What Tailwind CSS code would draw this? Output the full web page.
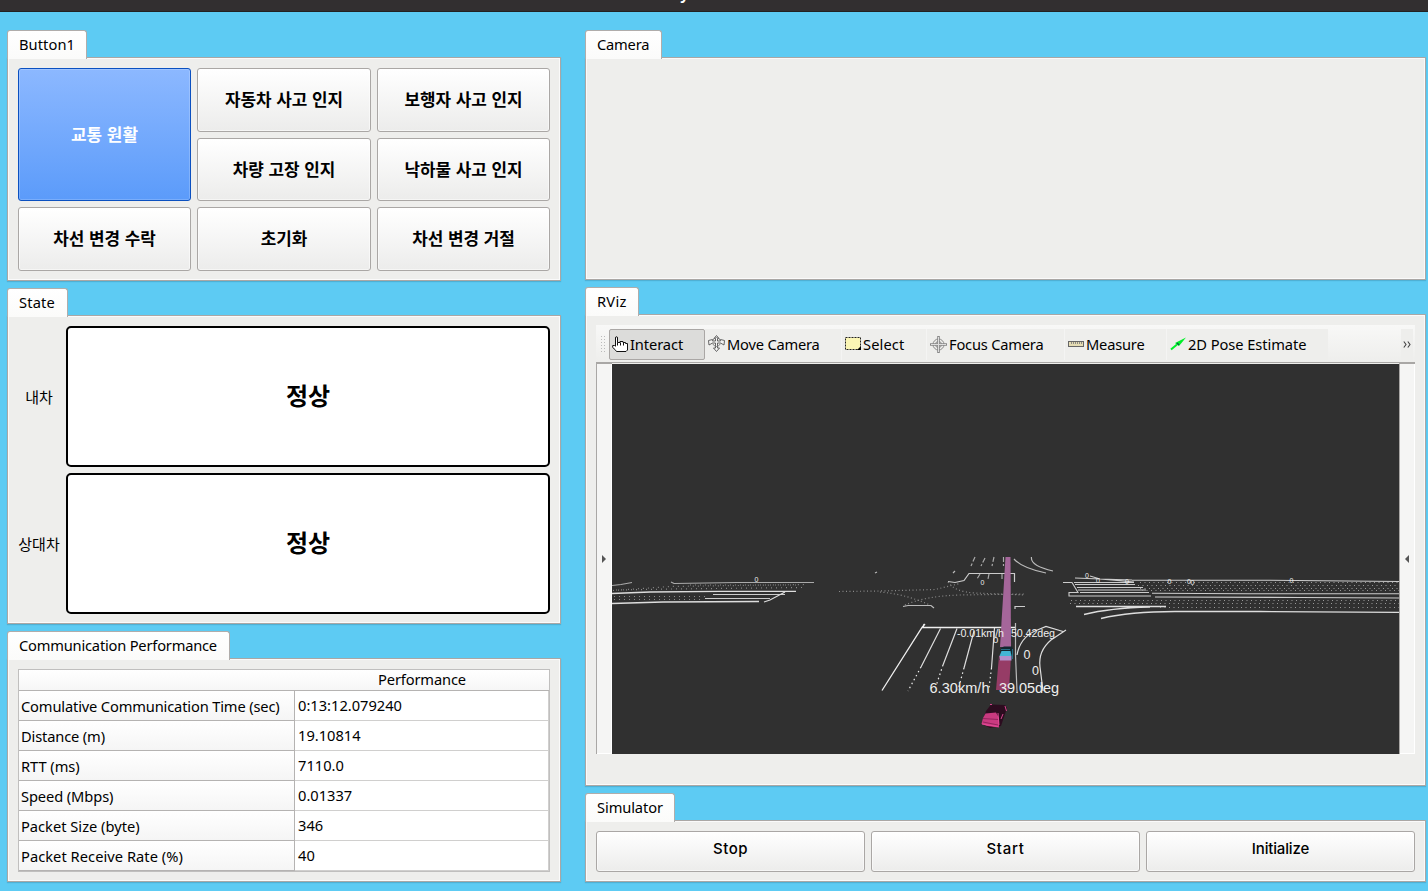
<!DOCTYPE html>
<html lang="ko">
<head>
<meta charset="utf-8">
<title>Cooperative driving monitor</title>
<script src="https://cdn.jsdelivr.net/npm/@tailwindcss/browser@4"></script>
</head>
<body class="w-[1428px] h-[891px] overflow-hidden flex flex-col bg-[#5dcbf3] text-black text-[14.67px] font-['Noto_Sans','Noto_Sans_CJK_KR',sans-serif]">
<header class="h-3 shrink-0 bg-[#322f30] border-b border-[#222] overflow-hidden flex justify-center text-white font-bold leading-none"><span class="-mt-[13px] mr-[59px]">y</span></header>
<main class="flex pl-[7px] gap-6 pt-[18px]">
  <div class="w-[554px] flex flex-col">
    <section class="flex flex-col h-[251px]">
      <div class="relative z-10 w-20 h-[29px] -mb-0.5 rounded-t-[3px] border border-b-0 border-[#b0adab] bg-linear-to-b from-white to-[#fbfbfa] flex items-center pl-[11px] pb-0.5"><span class="tracking-[0.08px]">Button1</span></div>
      <div class="grow border border-[#aaa7a5] bg-[#eeeeec] shadow-[inset_0_0_0_1px_#fafafa,0_1px_1px_#4fb0d4] pt-2.5 pl-2.5 grid grid-cols-[173px_174px_173px] grid-rows-[64px_63px_64px] gap-1.5 font-bold text-[16.9px] font-['Noto_Sans_CJK_KR',sans-serif]">
        <button class="row-span-2 pb-0.5 rounded-[3px] border border-[#0b50c0] bg-linear-to-b from-[#8cb8ff] to-[#5b9bfa] text-white shadow-[inset_0_0_0_1px_#ffffff30]">교통 원활</button>
        <button class="pb-0.5 rounded-[3px] border border-[#aaa7a5] bg-linear-to-b from-white to-[#ececeb] shadow-[inset_0_0_0_1px_#ffffff80]">자동차 사고 인지</button>
        <button class="pb-0.5 rounded-[3px] border border-[#aaa7a5] bg-linear-to-b from-white to-[#ececeb] shadow-[inset_0_0_0_1px_#ffffff80]">보행자 사고 인지</button>
        <button class="pb-0.5 rounded-[3px] border border-[#aaa7a5] bg-linear-to-b from-white to-[#ececeb] shadow-[inset_0_0_0_1px_#ffffff80]">차량 고장 인지</button>
        <button class="pb-0.5 rounded-[3px] border border-[#aaa7a5] bg-linear-to-b from-white to-[#ececeb] shadow-[inset_0_0_0_1px_#ffffff80]">낙하물 사고 인지</button>
        <button class="pb-0.5 rounded-[3px] border border-[#aaa7a5] bg-linear-to-b from-white to-[#ececeb] shadow-[inset_0_0_0_1px_#ffffff80]">차선 변경 수락</button>
        <button class="pb-0.5 rounded-[3px] border border-[#aaa7a5] bg-linear-to-b from-white to-[#ececeb] shadow-[inset_0_0_0_1px_#ffffff80]">초기화</button>
        <button class="pb-0.5 rounded-[3px] border border-[#aaa7a5] bg-linear-to-b from-white to-[#ececeb] shadow-[inset_0_0_0_1px_#ffffff80]">차선 변경 거절</button>
      </div>
    </section>
    <section class="flex flex-col h-[336px] mt-[7px]">
      <div class="relative z-10 w-[61px] h-[29px] -mb-0.5 rounded-t-[3px] border border-b-0 border-[#b0adab] bg-linear-to-b from-white to-[#fbfbfa] flex items-center pl-[11px] pb-0.5"><span class="tracking-[0.15px]">State</span></div>
      <div class="grow border border-[#aaa7a5] bg-[#eeeeec] shadow-[inset_0_0_0_1px_#fafafa,0_1px_1px_#4fb0d4] pt-2.5 pl-2.5 grid grid-cols-[42px_484px] gap-x-1.5 grid-rows-[141px_141px] gap-y-1.5 text-center items-center font-['Noto_Sans_CJK_KR',sans-serif]">
        <span class="text-[15px] pt-0.5">내차</span>
        <div class="h-full rounded-[5px] border-2 border-black bg-white flex items-center justify-center pb-1 font-bold text-[24px]">정상</div>
        <span class="text-[15px] pt-0.5">상대차</span>
        <div class="h-full rounded-[5px] border-2 border-black bg-white flex items-center justify-center pb-1 font-bold text-[24px]">정상</div>
      </div>
    </section>
    <section class="flex flex-col h-[251px] mt-[7px]">
      <div class="relative z-10 w-[223px] h-[29px] -mb-0.5 rounded-t-[3px] border border-b-0 border-[#b0adab] bg-linear-to-b from-white to-[#fbfbfa] flex items-center pl-[11px] pb-0.5"><span class="tracking-[-0.2px]">Communication Performance</span></div>
      <div class="grow border border-[#aaa7a5] bg-[#eeeeec] shadow-[inset_0_0_0_1px_#fafafa,0_1px_1px_#4fb0d4] pt-2.5 pl-2.5">
        <div class="w-[532px] h-[203px] border border-[#c0bfbe] bg-white">
          <div class="h-[21px] border-b border-[#b5b3b2] bg-linear-to-b from-white to-[#f6f6f6] grid grid-cols-[276px_254px] leading-[19px]"><span></span><span class="text-center"><span class="tracking-[-0.15px]">Performance</span></span></div>
          <div class="grid grid-cols-[276px_254px] auto-rows-[30px]">
            <div class="border-b border-r border-[#b5b3b2] bg-linear-to-b from-white to-[#f5f5f5] flex items-center pl-0.5"><span class="tracking-[-0.15px] whitespace-nowrap">Comulative Communication Time (sec)</span></div><div class="border-b border-r border-[#d0cfce] flex items-center pl-[3px] pb-0.5"><span>0:13:12.079240</span></div>
            <div class="border-b border-r border-[#b5b3b2] bg-linear-to-b from-white to-[#f5f5f5] flex items-center pl-0.5"><span class="tracking-[-0.15px]">Distance (m)</span></div><div class="border-b border-r border-[#d0cfce] flex items-center pl-[3px] pb-0.5"><span>19.10814</span></div>
            <div class="border-b border-r border-[#b5b3b2] bg-linear-to-b from-white to-[#f5f5f5] flex items-center pl-0.5"><span class="tracking-[-0.05px]">RTT (ms)</span></div><div class="border-b border-r border-[#d0cfce] flex items-center pl-[3px] pb-0.5"><span>7110.0</span></div>
            <div class="border-b border-r border-[#b5b3b2] bg-linear-to-b from-white to-[#f5f5f5] flex items-center pl-0.5"><span class="tracking-[-0.1px]">Speed (Mbps)</span></div><div class="border-b border-r border-[#d0cfce] flex items-center pl-[3px] pb-0.5"><span>0.01337</span></div>
            <div class="border-b border-r border-[#b5b3b2] bg-linear-to-b from-white to-[#f5f5f5] flex items-center pl-0.5"><span class="tracking-[0px]">Packet Size (byte)</span></div><div class="border-b border-r border-[#d0cfce] flex items-center pl-[3px] pb-0.5"><span>346</span></div>
            <div class="border-b border-r border-[#b5b3b2] bg-linear-to-b from-white to-[#f5f5f5] flex items-center pl-0.5"><span class="tracking-[0.04px]">Packet Receive Rate (%)</span></div><div class="border-b border-r border-[#d0cfce] flex items-center pl-[3px] pb-0.5"><span>40</span></div>
          </div>
        </div>
      </div>
    </section>
  </div>

  <div class="w-[841px] flex flex-col">
    <section class="flex flex-col h-[250px]">
      <div class="relative z-10 w-[77px] h-[29px] -mb-0.5 rounded-t-[3px] border border-b-0 border-[#b0adab] bg-linear-to-b from-white to-[#fbfbfa] flex items-center pl-[11px] pb-0.5"><span class="tracking-[-0.2px]">Camera</span></div>
      <div class="grow border border-[#aaa7a5] bg-[#eeeeec] shadow-[inset_0_0_0_1px_#fafafa,0_1px_1px_#4fb0d4]"></div>
    </section>
    <section class="flex flex-col h-[499px] mt-[7px]">
      <div class="relative z-10 w-[54px] h-[29px] -mb-0.5 rounded-t-[3px] border border-b-0 border-[#b0adab] bg-linear-to-b from-white to-[#fbfbfa] flex items-center pl-[11px] pb-0.5"><span class="tracking-[0.25px]">RViz</span></div>
      <div class="grow border border-[#aaa7a5] bg-[#eeeeec] shadow-[inset_0_0_0_1px_#fafafa,0_1px_1px_#4fb0d4] pt-2.5 pl-2.5">
        <div class="w-[819px] h-[38px] pt-1 border-b border-[#a9a7a5] bg-linear-to-b from-[#f8f8f7] to-[#eeeeec] flex">
          <svg class="w-[13px] h-[31px] shrink-0" viewBox="0 0 13 31"><path d="M5.500 7v17M8.500 7v17" stroke="#bbb" stroke-dasharray="1 2" fill="none"/></svg>
          <div class="w-24 h-[31px] shrink-0 rounded-[2px] border border-[#aaa7a5] bg-[#dcdcda] flex items-center pl-0.5">
            <svg class="w-[17px] h-[17px] shrink-0 mr-px" viewBox="0 0 17 17"><path d="M3.500 10V2Q3.500.7 4.500.7T5.500 2V6.500H8V5.500H11V6.500H13.500V7.500H15.500V14L14 15.500H4.500L3 13.500.7 11.500V9.500H2.500L3.500 10.500" fill="#fff" stroke="#111"/><path d="M8.500 6.500V9.500M11.500 6.500v3M5.500 6.500v3" stroke="#111"/></svg>
            <span class="tracking-[-0.1px] pb-0.5">Interact</span></div>
          <div class="w-[137px] h-[31px] shrink-0 bg-[#eeeeec] border-r border-[#f4f4f3] flex items-center pl-[3px]">
            <svg class="w-[17px] h-[17px] shrink-0 mr-0.5 -mt-0.5" viewBox="0 0 17 17" fill="none" stroke="#555" stroke-width=".9"><path d="M8.500.5 11 3.500H9.500V6H12.500V4.500L16.500 5.500 16 10 12.500 8H9.500v5H11.500L8.500 16.500 5.500 13H7.500V8H4.500L1 10 .5 5.500 4.500 4.500V6H7.500V3.500H6z" fill="#f4f4f3"/><path d="M4.500 6Q5.500 2.500 8.500 2.500T12.500 6M4.500 8.500Q6 11.500 8.500 11.500T12.500 8.500" stroke="#777"/></svg>
            <span class="tracking-[-0.2px] pb-0.5">Move Camera</span></div>
          <div class="w-[85px] h-[31px] shrink-0 bg-[#eeeeec] border-r border-[#f4f4f3] flex items-center pl-[3px]">
            <svg class="w-[17px] h-[14px] shrink-0 mr-px -mt-0.5" viewBox="0 0 17 14"><rect x=".5" y=".5" width="15" height="12" fill="#fbf6b5" stroke="#222" stroke-dasharray="2 1"/><path d="M16 9v4h-4z" fill="#000"/></svg>
            <span class="tracking-[0.1px] pb-0.5">Select</span></div>
          <div class="w-[138px] h-[31px] shrink-0 bg-[#eeeeec] border-r border-[#f4f4f3] flex items-center pl-[3px]">
            <svg class="w-[17px] h-[17px] shrink-0 mr-0.5" viewBox="0 0 17 17" fill="none" stroke="#888"><circle cx="8.500" cy="8.500" r="5.500"/><circle cx="8.500" cy="8.500" r="3"/><path d="M8.500 0v17M0 8.500h17" stroke-width="2.600" stroke="#888"/><path d="M8.500 1v15M1 8.500h15" stroke="#ddd"/></svg>
            <span class="tracking-[-0.2px] pb-0.5">Focus Camera</span></div>
          <div class="w-[102px] h-[31px] shrink-0 bg-[#eeeeec] border-r border-[#f4f4f3] flex items-center pl-[3px]">
            <svg class="w-[16px] h-[8px] shrink-0 mr-0.5 -mt-0.5" viewBox="0 0 16 8"><rect x=".5" y="1.500" width="15" height="5" fill="#e5dcb4" stroke="#666"/><path d="M3.500 2v2M5.500 2v2M7.500 2v2M9.500 2v2M11.500 2v2M13.500 2v2" stroke="#777" stroke-width=".8"/></svg>
            <span class="tracking-[-0.2px] pb-0.5">Measure</span></div>
          <div class="w-[161px] h-[31px] shrink-0 bg-[#eeeeec] flex items-center pl-[3px]">
            <svg class="w-[16px] h-[14px] shrink-0 mr-0.5 -mt-0.5" viewBox="0 0 16 14"><path d="M1 12.500 7 7.500" stroke="#00f028" stroke-width="2"/><path d="M16 .5 5 6l4 3z" fill="#00f028"/><path d="M7 6l2 2" stroke="#064" stroke-width="1.500"/></svg>
            <span class="tracking-[-0.07px] pb-0.5">2D Pose Estimate</span></div>
          <div class="ml-auto mr-0.5 w-3 h-[31px] bg-[#eeeeec] flex items-center justify-center"><svg class="w-2 h-[7px]" viewBox="0 0 8 7"><path d="M.8.5 3 3.500.8 6.500M4.800.5 7 3.500 4.800 6.500" fill="none" stroke="#444" stroke-width="1.100"/></svg></div>
        </div>
        <div class="w-[819px] h-[391px] flex">
          <div class="w-4 border-l border-t border-[#a9a7a5] shadow-[inset_-1px_-1px_0_#fff] bg-[#f5f5f4] flex items-center justify-center pr-0.5"><svg class="w-1 h-2" viewBox="0 0 4 8"><path d="M0 0l4 4-4 4z" fill="#555"/></svg></div>
          <div class="w-[787px] pt-px bg-[#eeeeec]">
          <svg class="block w-[787px] h-[390px] bg-[#303030]" viewBox="612 364 787 390" fill="none" stroke="#e0e0e0" font-family="Liberation Sans, sans-serif">
            <!-- left road -->
            <g stroke-width="1.200">
              <path d="M612 585.500 621 584.500 632 582.500M671 582 674 583.500 705 583.500M674 583.500 737 582.500 814 582.500" stroke="#aaa"/>
              <path d="M612 593.500 650 592 720 591.300 796 591.300M612 603.500 663 602 759 601.500" stroke="#ddd" stroke-width="1.300"/>
              <path d="M713 594.500h72M705 598.500h65" stroke="#ccc"/>
              <path d="M785 592 770 600 764 602" stroke="#ddd"/>
              <g stroke="#888" stroke-dasharray="1 4">
                <path d="M613 590.500 670 586.500 805 584.500M616 590 672 589 803 587.500M614 596.500h92M614 599.500h88M690 585h110"/>
              </g>
              <!-- intersection -->
              <path d="M839 591.500 880 591 935 589.500 960 583.500M880 592Q905 594 930 605M905 605Q925 596 960 595L1024 594M948 582Q955 592 975 593L1024 595" stroke="#8a8a8a" stroke-dasharray="1 2.500"/>
              <path d="M903 606.500 908 605.500H931L934 608M875 573l2-1M953 573l2-2" stroke="#bbb"/>
              <path d="M948 581.500 955 582.500 964 580.500 969 573.500H1014.500V582M1015 609v-2.500h10" stroke="#ccc"/>
              <path d="M975 557l-4 9M985 558l-4 8M994 557l-2 9M1003.500 557v9M980 574l-3 5M989 574l-1 5M1002 574v6" stroke="#aaa" stroke-dasharray="5 2"/>
              <path d="M1014 559Q1022 568 1046 573M1031.500 557Q1030 566 1053 571" stroke="#bbb"/>
              <path d="M921.500 627.500H1016M925 624l-3 3.500L882 690.500M924 624l-1 4" stroke="#eee" stroke-width="1.300"/>
              <path d="M940.500 628.500 921 667M957 628.500 943 665M974 631 964 668M994.500 628 991.500 668" stroke="#ddd"/>
              <path d="M921 667 908 691M943 665 936 686M964 668 958 690M991.500 668 989 688" stroke="#eee" stroke-dasharray="1.500 3"/>
              <path d="M1015.500 623V655L1017 691" stroke="#bbb"/>
              <path d="M1017 655Q1020 638 1035 631L1046 626.500L1063 631.500M1066 630L1051 640Q1038 651 1040 667L1043 691" stroke="#ddd"/>
            </g>
            <!-- right road -->
            <g stroke-width="1.100">
              <path d="M1063 582.500H1072L1078 592.500H1069V596H1151M1075 578 1100 579 1132 580M1090 576 1100 579 1134 582M1132 580.300H1270L1399 581.500" stroke="#ccc"/>
              <path d="M1074 582.500h60M1075 584.500h60M1077 587.500h66M1078 590h68M1080 592.500h69M1152 593.300 1250 593.800 1399 593.800M1155 597 1300 597.500 1399 598" stroke="#ccc"/>
              <path d="M1076 606.500H1166M1084 614.500Q1110 608 1150 607M1101 618.500Q1130 611.500 1175 611.500L1260 611.500 1399 612.300" stroke="#ddd" stroke-width="1.300"/>
              <path d="M1140 582.500h259M1138 585.500H1399M1140 588.500H1399M1142 590.500H1399M1071 600.500H1399M1070 603.500H1399M1160 607.500H1399" stroke="#999" stroke-dasharray="1 3.500"/>
            </g>
            <!-- predicted paths -->
            <path d="M1005.500 557h5L1011 647H1000z" fill="#a5669a" stroke="none"/>
            <path d="M999 656h12L1009 690H996z" fill="#963c66" stroke="none"/>
            <!-- vehicles -->
            <path d="M1001 648 1004 646.500H1012L1013 650 1012 660H999.500z" fill="#12262f" stroke="none"/>
            <path d="M1001.500 651H1010.500L1011.500 656H999.500z" fill="#42b5d5" stroke="none"/>
            <path d="M1001 649.500h9M1012.500 649v10" stroke="#2d8099" stroke-width=".8"/>
            <path d="M999.500 656H1011.500V660.500H1000z" fill="#b18fca" stroke="none"/>
            <path d="M986 711 991 704.500 1005 705 1007 708 1004 717 1001 726 990 728 982 724z" fill="#2c0c1f" stroke="none"/>
            <path d="M985.500 713.500 996 712.500 999 718 999 727.500 987 726 981.500 724 983 718z" fill="#c93a80" stroke="none"/>
            <path d="M983 718.500l15 1M983 722l15 3" stroke="#8c2459" stroke-width=".9"/>
            <path d="M982 724l16 2.500M998 713l1 12M1005 706l1.500 5M1001 719l2-5M990 704.500h2" stroke="#e84c9b" stroke-width=".9"/>
            <g fill="#eee" stroke="none">
              <text x="929.500" y="693" font-size="14.500" textLength="60">6.30km/h</text>
              <text x="999" y="693" font-size="14.500" textLength="60">39.05deg</text>
              <g font-size="10.700"><text x="957" y="637" textLength="47">-0.01km/h</text><text x="1011" y="637" textLength="44">50.42deg</text></g>
              <g font-size="12.500"><text x="1023.500" y="658.500">0</text><text x="1032" y="675">0</text></g>
              <text x="993" y="643" font-size="9.500">0</text>
              <g font-size="7"><text x="980.500" y="585">0</text><text x="754.500" y="582">0</text><text x="1085" y="578">0</text><text x="1096" y="583">0</text><text x="1125" y="584">0</text><text x="1167.500" y="583.500">0</text><text x="1187" y="584">0</text><text x="1190.500" y="585">0</text><text x="1289.500" y="583">0</text></g>
            </g>
          </svg>
          </div>
          <div class="w-4 border-l border-t border-[#a9a7a5] shadow-[inset_-1px_-1px_0_#fff] bg-[#f5f5f4] flex items-center justify-center pr-0.5"><svg class="w-1 h-2" viewBox="0 0 4 8"><path d="M4 0L0 4l4 4z" fill="#555"/></svg></div>
        </div>
      </div>
    </section>
    <section class="flex flex-col h-[89px] mt-[7px]">
      <div class="relative z-10 w-[90px] h-[29px] -mb-0.5 rounded-t-[3px] border border-b-0 border-[#b0adab] bg-linear-to-b from-white to-[#fbfbfa] flex items-center pl-[11px] pb-0.5"><span class="tracking-[-0.1px]">Simulator</span></div>
      <div class="grow border border-[#aaa7a5] bg-[#eeeeec] shadow-[inset_0_0_0_1px_#fafafa,0_1px_1px_#4fb0d4] pt-2.5 pl-2.5 grid grid-cols-[269px_269px_269px] grid-rows-[41px] gap-1.5 font-medium text-[15px] font-['Inter',sans-serif]">
        <button class="rounded-[3px] border border-[#aaa7a5] bg-linear-to-b from-white to-[#ececeb] shadow-[inset_0_0_0_1px_#ffffff80] pb-[5px] tracking-[0.5px]">Stop</button>
        <button class="rounded-[3px] border border-[#aaa7a5] bg-linear-to-b from-white to-[#ececeb] shadow-[inset_0_0_0_1px_#ffffff80] pb-[5px] tracking-[0.7px]">Start</button>
        <button class="rounded-[3px] border border-[#aaa7a5] bg-linear-to-b from-white to-[#ececeb] shadow-[inset_0_0_0_1px_#ffffff80] pb-[5px] tracking-[-0.15px]">Initialize</button>
      </div>
    </section>
  </div>
</main>
</body>
</html>
